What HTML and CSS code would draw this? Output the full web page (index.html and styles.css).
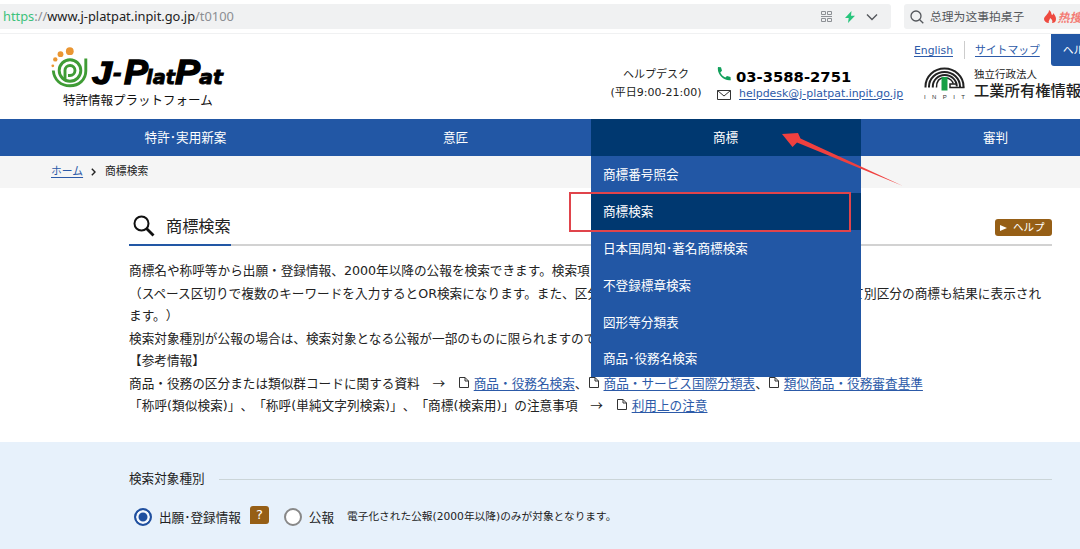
FILE: index.html
```html
<!DOCTYPE html>
<html lang="ja">
<head>
	<meta charset="UTF-8">
	<title>J-PlatPat</title>
	<link rel="stylesheet" href="styles.css">
</head>
<body>
<div class="browser">
	<div class="address">
		<span class="url"><span class="scheme">https</span><span class="dim">://</span>www.j-platpat.inpit.go.jp<span class="dim">/t0100</span></span>
		<svg class="qr" width="11" height="11" viewBox="0 0 11 11" fill="none" stroke="#8d9095">
			<path d="M.5.5h4v3h-4zM6.5.5h4v3h-4zM.5 7.5h4v3h-4zM6.500 7.500h4v3h-4zM0 5.500h11"/>
		</svg>
		<svg class="bolt" width="10" height="12" viewBox="0 0 10 12"><path d="M6.500 0L0 7h3.700L3 12l7-7.200H6z" fill="#27c57c"/></svg>
		<svg class="down" width="12" height="8" viewBox="0 0 12 8"><path d="M1 1.500l5 5 5-5" fill="none" stroke="#54575c" stroke-width="1.400"/></svg>
	</div>
	<div class="search">
		<svg width="14" height="14" viewBox="0 0 14 14" fill="none" stroke="#54575c" stroke-width="1.300"><circle cx="6" cy="6" r="5"/><path d="M9.700 9.700l3.600 3.600"/></svg>
		<span class="query" lang="zh">总理为这事拍桌子</span>
		<svg class="fire" width="12" height="13" viewBox="0 0 12 13"><path d="M5 0c3 2 2 4 3 5 1 0 1-1 1-2 2 2 3 4 3 6 0 3-2 4-4 4 1-2 0-4-2-5 0 2-2 3-1 5-3 0-5-2-5-4 0-3 5-5 5-9z" fill="#ee4a40"/></svg>
		<span class="hot" lang="zh">热搜</span>
	</div>
</div>

<header>
	<div class="logo">
		<svg width="176" height="44" viewBox="0 0 176 44">
			<g fill="none" stroke="#3f9c35" stroke-width="2.900">
				<path d="M3.300 23.500C4 33 11 38.800 20 38.800S35.800 32.500 35.800 24V11.500"/>
				<circle cx="20" cy="23.500" r="10.800"/>
				<path d="M15 33V23.300a5 5 0 1 1 5 5.200h-2"/>
			</g>
			<g fill="#ea9632"><circle cx="19.800" cy="4.200" r="3.900"/><circle cx="10.500" cy="7.200" r="2.900"/><circle cx="5.300" cy="12.400" r="2.200"/><circle cx="2.800" cy="18.800" r="1.400"/></g>
			<g class="mark">
				<text class="cap" x="42" y="37" font-size="32" textLength="20" lengthAdjust="spacingAndGlyphs">J</text>
				<text x="63" y="34" font-size="22" textLength="9" lengthAdjust="spacingAndGlyphs">-</text>
				<text class="cap" x="74" y="37" font-size="35" textLength="24" lengthAdjust="spacingAndGlyphs">P</text>
				<text x="96" y="37" font-size="20" textLength="29" lengthAdjust="spacingAndGlyphs">lat</text>
				<text class="cap" x="125" y="37" font-size="35" textLength="25" lengthAdjust="spacingAndGlyphs">P</text>
				<text x="149" y="37" font-size="20" textLength="24" lengthAdjust="spacingAndGlyphs">at</text>
			</g>
		</svg>
		<div class="tagline">特許情報プラットフォーム</div>
	</div>
	<div class="desk">
		<div>ヘルプデスク</div>
		<div>(平日9:00-21:00)</div>
	</div>
	<div class="contact">
		<div class="tel">
			<svg width="14" height="14" viewBox="0 0 14 14"><path d="M1 0l3 .3 1 3.500-1.700 1.700c1 2.300 2.700 4 5 5L10 9l3.500 1 .3 3.200C7 14.500-.5 7 1 0z" fill="#12a05c"/></svg>
			<b>03-3588-2751</b>
		</div>
		<div class="mail">
			<svg width="14" height="10" viewBox="0 0 14 10" fill="none" stroke="#333"><path d="M.5.5h13v9H.5zM.5.5L7 6 13.500.5"/></svg>
			<a href="#">helpdesk@j-platpat.inpit.go.jp</a>
		</div>
	</div>
	<div class="side">
		<div class="links">
			<a href="#">English</a>
			<a href="#" class="sitemap">サイトマップ</a>
			<span class="help-tab">ヘルプ</span>
		</div>
		<div class="inpit">
			<svg width="42" height="33" viewBox="0 0 42 33">
				<g fill="none" stroke="#222"><path d="M1.500 20.500v-1a19 18 0 0 1 38 0v1M5 20.500v-1a15.500 14.500 0 0 1 31 0v1" stroke-width="2"/><path d="M8.800 20.500v-1a12 11.500 0 0 1 24 0" stroke-width="2"/><path d="M12.500 20.500c0-7 3-9.700 8-9.700 6 0 8.500 4 8.500 6" stroke-width="1.500"/><path d="M40.500 20.500H26v-3.500h6" stroke-width="1.500"/></g>
				<path d="M17.500 10h6v13.500h-6z" fill="#16a046"/>
				<text x="0" y="31.500" font-size="6" textLength="41" fill="#333">INPIT</text>
			</svg>
			<div class="org"><small>独立行政法人</small><strong>工業所有権情報･研修館</strong></div>
		</div>
	</div>
</header>

<nav>
	<div class="tab">特許･実用新案</div>
	<div class="tab">意匠</div>
	<div class="tab active">商標
		<ul class="menu">
			<li>商標番号照会</li>
			<li class="on">商標検索</li>
			<li>日本国周知･著名商標検索</li>
			<li>不登録標章検索</li>
			<li>図形等分類表</li>
			<li>商品･役務名検索</li>
		</ul>
		<div class="frame"></div>
		<svg class="arrow" width="122" height="55" viewBox="0 0 122 55"><path d="M0 2L16 1l2.500 5.500L121 54 15 10.500 10.500 15z" fill="#f0403f"/></svg>
	</div>
	<div class="tab">審判</div>
</nav>

<div class="crumbs">
	<a href="#">ホーム</a>
	<svg width="5" height="8" viewBox="0 0 5 8"><path d="M.8.8L4 4 .8 7.200" fill="none" stroke="#222" stroke-width="1.400"/></svg>
	<span>商標検索</span>
</div>

<main>
	<div class="title">
		<h1>
			<svg width="22" height="22" viewBox="0 0 22 22" fill="none" stroke="#111"><circle cx="8.500" cy="8.500" r="7" stroke-width="2"/><path d="M13.500 13.500l7 7" stroke-width="2.800"/></svg>
			<span>商標検索</span>
		</h1>
		<span class="help"><i></i>ヘルプ</span>
	</div>
	<div class="lead">
		商標名や称呼等から出願・登録情報、2000年以降の公報を検索できます。検索項目を選択してください。<br>
		（スペース区切りで複数のキーワードを入力するとOR検索になります。また、区分を指定した場合でも、類似群のコードによって別区分の商標も結果に表示され<br>
		ます。）<br>
		検索対象種別が公報の場合は、検索対象となる公報が一部のものに限られますのでご注意ください。<br>
		【参考情報】<br>
		商品・役務の区分または類似群コードに関する資料　<span class="to">→</span>　<svg class="doc" viewBox="0 0 10 11"><path d="M.5.5h5.500l3.500 3.500v6.500h-9zM6 .5V4h3.500"/></svg><a href="#">商品・役務名検索</a>、<svg class="doc near" viewBox="0 0 10 11"><path d="M.5.5h5.500l3.500 3.500v6.500h-9zM6 .5V4h3.500"/></svg><a href="#">商品・サービス国際分類表</a>、<svg class="doc near" viewBox="0 0 10 11"><path d="M.5.5h5.500l3.500 3.500v6.500h-9zM6 .5V4h3.500"/></svg><a href="#">類似商品・役務審査基準</a><br>
		<span class="wide">「称呼(類似検索)」、「称呼(単純文字列検索)」、「商標(検索用)」の注意事項</span>　<span class="to">→</span>　<svg class="doc" viewBox="0 0 10 11"><path d="M.5.5h5.500l3.500 3.500v6.500h-9zM6 .5V4h3.500"/></svg><a href="#">利用上の注意</a>
	</div>
</main>

<section class="form">
	<h2>検索対象種別</h2>
	<div class="options">
		<span class="radio checked"></span>
		<span class="label">出願･登録情報</span>
		<span class="tip">?</span>
		<span class="radio"></span>
		<span class="label">公報</span>
		<span class="note">電子化された公報(2000年以降)のみが対象となります。</span>
	</div>
</section>
</body>
</html>
```
FILE: styles.css
```css
*{box-sizing:border-box;}
body{margin:0;width:1080px;height:549px;overflow:hidden;background:#fff;color:#222;font:12.6px/22.5px "DejaVu Sans","Noto Sans CJK JP",sans-serif;text-spacing-trim:space-all;}
a{color:#2c5aa8;text-decoration:underline;text-underline-offset:2px;}
svg{display:block;flex:none;}

.browser{display:flex;gap:13px;height:34px;padding-top:4px;border-bottom:1px solid #f0f1f2;background:#fff;}
.address,.search{display:flex;align-items:center;height:25px;background:#f0f1f2;}
.address{width:891px;padding-left:3px;border-radius:0 3px 3px 0;}
.url{flex:1;font-family:"Noto Sans",sans-serif;font-size:12.850px;color:#222;white-space:nowrap;}
.scheme{color:#3cc27c;}
.dim{color:#8b8e92;}
.bolt{margin-left:13px;}
.down{margin:0 13px 0 11px;}
.search{flex:1;padding-left:6px;overflow:hidden;border-radius:3px 0 0 3px;white-space:nowrap;}
.query{margin-left:6px;font-family:"Noto Sans CJK SC",sans-serif;font-size:11.8px;color:#55585c;}
.fire{margin-left:20px;}
.hot{margin-left:1px;font:italic bold 12px "Noto Sans CJK SC",sans-serif;color:#f47d76;}

header{display:flex;height:85px;overflow:hidden;}
.logo{width:176px;margin:13px 0 0 50px;}
.mark{font-family:"DejaVu Sans",sans-serif;font-weight:bold;font-style:italic;fill:#000;stroke:#000;stroke-width:.8px;}
.mark .cap{font-family:"Liberation Sans",sans-serif;stroke-width:1.4px;}
.tagline{margin:-1px 0 0 13px;font-size:12.5px;color:#111;white-space:nowrap;}
.desk{width:100px;margin:32px 0 0 380px;font-size:11px;line-height:18px;text-align:center;white-space:nowrap;}
.contact{margin:33px 0 0 11px;width:187px;}
.tel,.mail{display:flex;height:18px;white-space:nowrap;}
.tel b{margin:0 0 0 5px;font-size:14.8px;line-height:19px;color:#000;}
.mail{align-items:center;}
.mail svg{margin-top:2px;}
.mail a{margin-left:8px;font-size:10.950px;}
.side{flex:1;min-width:0;margin-left:10px;white-space:nowrap;}
.links{display:flex;height:32px;line-height:33px;font-size:10.800px;}
.sitemap{margin-left:22px;}
.links a:first-child{position:relative;}
.links a:first-child:after{content:"";position:absolute;left:50px;top:7px;height:18px;border-left:1px solid #ccc;}
.help-tab{flex:none;width:60px;margin-left:11px;padding-left:12px;background:#2257a5;color:#fff;border-radius:0 0 0 3px;}
.inpit{display:flex;margin:1px 0 0 10px;}
.inpit text{font-family:"Liberation Sans",sans-serif;}
.org{margin-left:8px;color:#222;}
.org small,.org strong{display:block;font-weight:normal;}
.org small{font-size:10.500px;line-height:14px;}
.org strong{font-size:15.300px;line-height:20px;font-weight:500;}

nav{display:flex;height:37px;padding-left:51px;background:#2257a5;}
.tab{flex:none;position:relative;width:270px;padding-right:1px;line-height:38px;text-align:center;color:#fff;}
.tab.active{background:#003870;}
.menu{position:absolute;z-index:2;left:0;top:37px;width:270px;margin:0;padding:0;background:#2257a5;list-style:none;text-align:left;}
.menu li{height:36.900px;padding-left:12px;line-height:38.500px;}
.menu .on{background:#003870;}
.frame{position:absolute;z-index:3;left:-22px;top:73px;width:282px;height:40px;border:2px solid #e0444b;}
.arrow{position:absolute;z-index:3;left:191px;top:13px;}

.crumbs{display:flex;align-items:center;height:32px;padding-left:51px;background:#f5f5f5;font-size:10.800px;}
.crumbs svg{margin:0 9px 0 8px;}

main{height:254px;margin:0 28px 0 129px;}
.title{display:flex;justify-content:space-between;height:58px;border-bottom:2px solid #d2d2d2;}
h1{display:flex;align-items:center;gap:11px;height:58px;margin:0;padding:20px 0 0 4px;border-bottom:2px solid #2257a5;font-size:16.200px;font-weight:normal;color:#222;}
h1 span{padding-top:2px;}
.help{display:flex;align-items:center;width:57px;height:17px;margin-top:31px;padding-left:5px;border-radius:3px;background:#965f16;color:#fff;font-size:10.500px;line-height:17px;}
.help i{margin-right:6px;border:solid transparent;border-width:3.500px 0 3.500px 7px;border-left-color:#fff;}
.lead{margin-top:14px;font-size:12.650px;white-space:nowrap;}
.to{font-family:"Noto Sans CJK JP",sans-serif;line-height:1;}
.wide{letter-spacing:.05px;}
.doc{display:inline-block;width:10px;height:11px;margin:0 5px 0 1px;vertical-align:0;fill:#fff;stroke:#333;}
.doc.near{margin-left:1px;}

.form{height:108px;padding:26px 28px 0 129px;background:#e7f1fb;}
h2{display:flex;align-items:center;gap:14px;margin:0;font-size:12.600px;font-weight:normal;}
h2:after{content:"";flex:1;border-top:1px solid #cbd5d8;}
.options{display:flex;align-items:center;height:26px;margin-top:13px;padding-left:5px;white-space:nowrap;}
.radio{width:18px;height:18px;border:2px solid #888;border-radius:50%;background:#fff;}
.radio.checked{padding:3px;border-color:#1f4f9f;background:#1f4f9f;box-shadow:inset 0 0 0 2.500px #f4f8fd;}
.label{margin-left:7px;padding-top:3px;}
.tip{width:19px;height:18px;margin:-4px 15px 0 9px;border-radius:3px 3px 3px 0;background:#965f16;color:#fff;font-size:13px;line-height:18px;text-align:center;}
.note{margin-left:13px;padding-top:1px;font-size:10.700px;}
```
